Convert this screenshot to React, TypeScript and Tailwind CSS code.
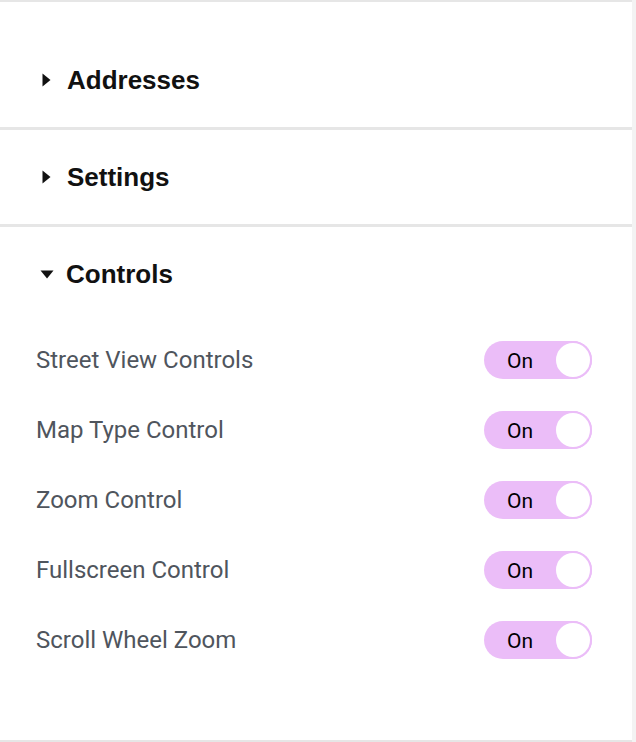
import React, { useState } from 'react';

const controls = [
  'Street View Controls',
  'Map Type Control',
  'Zoom Control',
  'Fullscreen Control',
  'Scroll Wheel Zoom',
];

const Caret = ({ open }: { open: boolean }) =>
  open ? (
    <svg width="14" height="9" viewBox="0 0 14 9" className="shrink-0">
      <path d="M0.5 0.5 L13.5 0.5 L7 8.5 Z" fill="#111" />
    </svg>
  ) : (
    <svg width="9" height="14" viewBox="0 0 9 14" className="shrink-0">
      <path d="M0.5 0.5 L8.5 7 L0.5 13.5 Z" fill="#111" />
    </svg>
  );

const Toggle = ({ on, onClick }: { on: boolean; onClick: () => void }) => (
  <button
    onClick={onClick}
    className="flex h-[38px] w-[108px] items-center justify-between rounded-full bg-[#ebbdf8] pl-[23px]"
  >
    <span className="mt-[3px] text-[21px] leading-none text-black" style={{ fontFamily: 'Roboto, sans-serif' }}>
      {on ? 'On' : 'Off'}
    </span>
    <span className="h-[38px] w-[38px] rounded-full border-2 border-[#ebbdf8] bg-white" />
  </button>
);

export default function App() {
  const [values, setValues] = useState<boolean[]>(controls.map(() => true));

  return (
    <div className="flex h-[742px] w-[636px] bg-white" style={{ fontFamily: '"Liberation Sans", Arial, sans-serif' }}>
      <div className="flex w-[632px] flex-col border-t-2 border-b-2 border-[#e6e6e6]">
        {/* Addresses */}
        <div className="flex h-[125px] items-center gap-[16px] pl-[42px] pt-[31px]">
          <Caret open={false} />
          <span className="text-[26px] font-bold text-[#111]">Addresses</span>
        </div>
        <div className="h-[3px] bg-[#e6e6e6]" />

        {/* Settings */}
        <div className="flex h-[94px] items-center gap-[16px] pl-[42px]">
          <Caret open={false} />
          <span className="text-[26px] font-bold text-[#111]">Settings</span>
        </div>
        <div className="h-[3px] bg-[#e6e6e6]" />

        {/* Controls */}
        <div className="flex h-[94px] items-center gap-[12px] pl-[40px]">
          <Caret open={true} />
          <span className="text-[26px] font-bold text-[#111]">Controls</span>
        </div>
        <div className="flex flex-col pl-[36px] pr-[40px] pt-[4px]">
          {controls.map((label, i) => (
            <div key={label} className="flex h-[70px] items-center justify-between">
              <span className="text-[24px] text-[#4f555d]" style={{ fontFamily: 'Roboto, sans-serif' }}>
                {label}
              </span>
              <Toggle
                on={values[i]}
                onClick={() => setValues(prev => prev.map((v, j) => (j === i ? !v : v)))}
              />
            </div>
          ))}
        </div>
      </div>
      <div className="w-[4px] bg-[#f3f3f3]" />
    </div>
  );
}
